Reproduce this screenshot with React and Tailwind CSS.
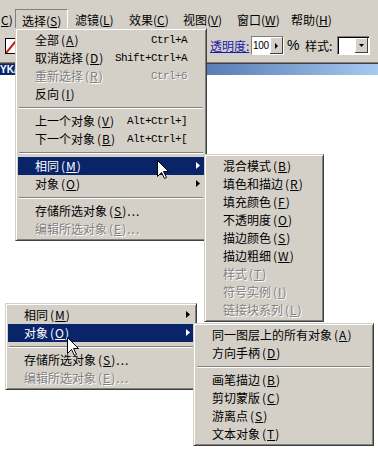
import React from "react";

const FONT = "font-['Noto_Sans_CJK_SC','Liberation_Sans',sans-serif]";

function Arrow() {
  return (
    <svg className="absolute right-[4px] top-[5px]" width="4" height="7" viewBox="0 0 4 7">
      <path d="M0 0 L4 3.5 L0 7 Z" fill="currentColor" />
    </svg>
  );
}

function Item({ it, pl }) {
  const base = "relative h-[18px] flex items-center whitespace-nowrap pr-[17px]";
  const state = it.h
    ? " bg-[#0a246a] text-white"
    : it.d
    ? " text-[#808080] [text-shadow:1px_1px_0_#ffffff]"
    : " text-black";
  return (
    <div className={base + state + " " + pl}>
      <span>
        {it.l}
        <span className="ml-[2px] tracking-[1px]">
          (<span className="underline">{it.k}</span>)
        </span>
        {it.e ? <span className="tracking-[1px]">{it.e}</span> : null}
      </span>
      {it.s ? (
        <span className="ml-auto font-['Liberation_Mono',monospace] text-[11px] tracking-[-0.6px]">
          {it.s}
        </span>
      ) : null}
      {it.a ? <Arrow /> : null}
    </div>
  );
}

function Menu({ items, pos, pl }) {
  return (
    <div
      className={
        "absolute bg-[#d4d0c8] border border-t-[#d4d0c8] border-l-[#d4d0c8] border-r-[#404040] border-b-[#404040] shadow-[inset_1px_1px_0_#ffffff,inset_-1px_-1px_0_#808080] p-[2px] text-[12px] " +
        pos
      }
    >
      {items.map((it, i) =>
        it === "sep" ? (
          <div key={i} className="h-[9px] flex items-center px-px">
            <div className="w-full h-[2px] border-t border-t-[#808080] border-b border-b-white" />
          </div>
        ) : (
          <Item key={i} it={it} pl={pl} />
        )
      )}
    </div>
  );
}

function Cursor({ pos }) {
  return (
    <svg className={"absolute " + pos} width="13" height="20" viewBox="0 0 13 20">
      <path
        d="M0.5 0.5 L0.5 16.5 L4.5 12.5 L7.5 18.5 L9.5 17.5 L6.5 11.5 L11.5 11.5 Z"
        fill="#ffffff"
        stroke="#000000"
        strokeWidth="1"
      />
    </svg>
  );
}

const menu1 = [
  { l: "全部", k: "A", s: "Ctrl+A" },
  { l: "取消选择", k: "D", s: "Shift+Ctrl+A" },
  { l: "重新选择", k: "R", s: "Ctrl+6", d: true },
  { l: "反向", k: "I" },
  "sep",
  { l: "上一个对象", k: "V", s: "Alt+Ctrl+]" },
  { l: "下一个对象", k: "B", s: "Alt+Ctrl+[" },
  "sep",
  { l: "相同", k: "M", a: true, h: true },
  { l: "对象", k: "O", a: true },
  "sep",
  { l: "存储所选对象", k: "S", e: "..." },
  { l: "编辑所选对象", k: "E", e: "...", d: true },
];

const sub1 = [
  { l: "混合模式", k: "B" },
  { l: "填色和描边", k: "R" },
  { l: "填充颜色", k: "F" },
  { l: "不透明度", k: "O" },
  { l: "描边颜色", k: "S" },
  { l: "描边粗细", k: "W" },
  { l: "样式", k: "T", d: true },
  { l: "符号实例", k: "I", d: true },
  { l: "链接块系列", k: "L", d: true },
];

const menu2 = [
  { l: "相同", k: "M", a: true },
  { l: "对象", k: "O", a: true, h: true },
  "sep",
  { l: "存储所选对象", k: "S", e: "..." },
  { l: "编辑所选对象", k: "E", e: "...", d: true },
];

const sub2 = [
  { l: "同一图层上的所有对象", k: "A" },
  { l: "方向手柄", k: "D" },
  "sep",
  { l: "画笔描边", k: "B" },
  { l: "剪切蒙版", k: "C" },
  { l: "游离点", k: "S" },
  { l: "文本对象", k: "T" },
];

function MenuBarItem({ label, k, w, pressed }) {
  return (
    <div
      className={
        "h-[20px] flex items-center whitespace-nowrap " +
        w +
        (pressed
          ? " border border-t-[#808080] border-l-[#808080] border-r-white border-b-0 pl-[6px] pt-[2px]"
          : " pl-[7px] pt-px")
      }
    >
      {label}
      <span>
        (<span className="underline">{k}</span>)
      </span>
    </div>
  );
}

export default function App() {
  return (
    <div className={"relative w-[378px] h-[449px] overflow-hidden bg-white text-black " + FONT}>
      {/* menu bar */}
      <div className="h-[29px] bg-[#d4d0c8] flex items-end text-[12px]">
        <div className="w-[15px] h-[20px] flex items-center pl-[1px] pt-px whitespace-nowrap">
          <span className="underline">C</span>)
        </div>
        <MenuBarItem label="选择" k="S" w="w-[53px]" pressed />
        <MenuBarItem label="滤镜" k="L" w="w-[54px]" />
        <MenuBarItem label="效果" k="C" w="w-[54px]" />
        <MenuBarItem label="视图" k="V" w="w-[54px]" />
        <MenuBarItem label="窗口" k="W" w="w-[54px]" />
        <MenuBarItem label="帮助" k="H" w="w-[54px]" />
      </div>

      {/* toolbar */}
      <div className="h-[33px] bg-[#d4d0c8] flex items-center text-[12px]">
        <div className="ml-[5px] w-[12px] h-[16px] border border-black bg-white relative overflow-hidden">
          <svg className="absolute left-0 top-0" width="10" height="14" viewBox="0 0 10 14">
            <path d="M0 14 L10 2" stroke="#d01010" strokeWidth="2" />
          </svg>
        </div>
        <div className="ml-[193px] w-[40px] text-[#1a1aa8] underline whitespace-nowrap">透明度:</div>
        <div className="ml-[1px] w-[33px] h-[19px] flex border border-t-[#808080] border-l-[#808080] border-r-white border-b-white shadow-[inset_1px_1px_0_#000000]">
          <div className="w-[18px] bg-white pl-[1px] pt-[2px] font-['Liberation_Sans',sans-serif] text-[10px] leading-[14px] tracking-[-0.3px] whitespace-nowrap">
            100
          </div>
          <div className="flex-1 bg-[#d4d0c8] flex items-center justify-center shadow-[inset_-1px_-1px_0_#404040,inset_1px_1px_0_#ffffff]">
            <svg width="3" height="6" viewBox="0 0 3 6">
              <path d="M0 0 L3 3 L0 6 Z" fill="#000" />
            </svg>
          </div>
        </div>
        <div className="ml-[3px] w-[13px] font-['Liberation_Sans',sans-serif] text-[14px]">%</div>
        <div className="ml-[5px] w-[32px] whitespace-nowrap">样式:</div>
        <div className="w-[33px] h-[19px] flex border border-t-[#808080] border-l-[#808080] border-r-white border-b-white shadow-[inset_1px_1px_0_#000000] bg-white">
          <div className="flex-1" />
          <div className="w-[13px] my-[1px] mr-[1px] bg-[#d4d0c8] flex items-center justify-center shadow-[inset_-1px_-1px_0_#404040,inset_1px_1px_0_#ffffff]">
            <svg width="5" height="3" viewBox="0 0 5 3">
              <path d="M0 0 L5 0 L2.5 3 Z" fill="#000" />
            </svg>
          </div>
        </div>
      </div>

      {/* separator lines + title band */}
      <div className="h-px bg-[#808080]" />
      <div className="h-px bg-[#404040]" />
      <div className="h-[11px] bg-gradient-to-r from-[#0a246a] to-[#a6caf0] flex items-center">
        <span className="ml-0 text-white font-bold text-[10px] font-['Liberation_Sans',sans-serif] leading-none">
          YK/
        </span>
      </div>

      {/* upper menus */}
      <Menu items={menu1} pos="left-[15px] top-[28px] w-[192px]" pl="pl-[17px]" />
      <Menu items={sub1} pos="left-[204px] top-[154px] w-[120px]" pl="pl-[16px]" />
      <Cursor pos="left-[157px] top-[160px]" />

      {/* lower menus */}
      <Menu items={menu2} pos="left-[5px] top-[303px] w-[192px]" pl="pl-[16px]" />
      <Menu items={sub2} pos="left-[193px] top-[323px] w-[181px]" pl="pl-[16px]" />
      <Cursor pos="left-[67px] top-[337px]" />
    </div>
  );
}
